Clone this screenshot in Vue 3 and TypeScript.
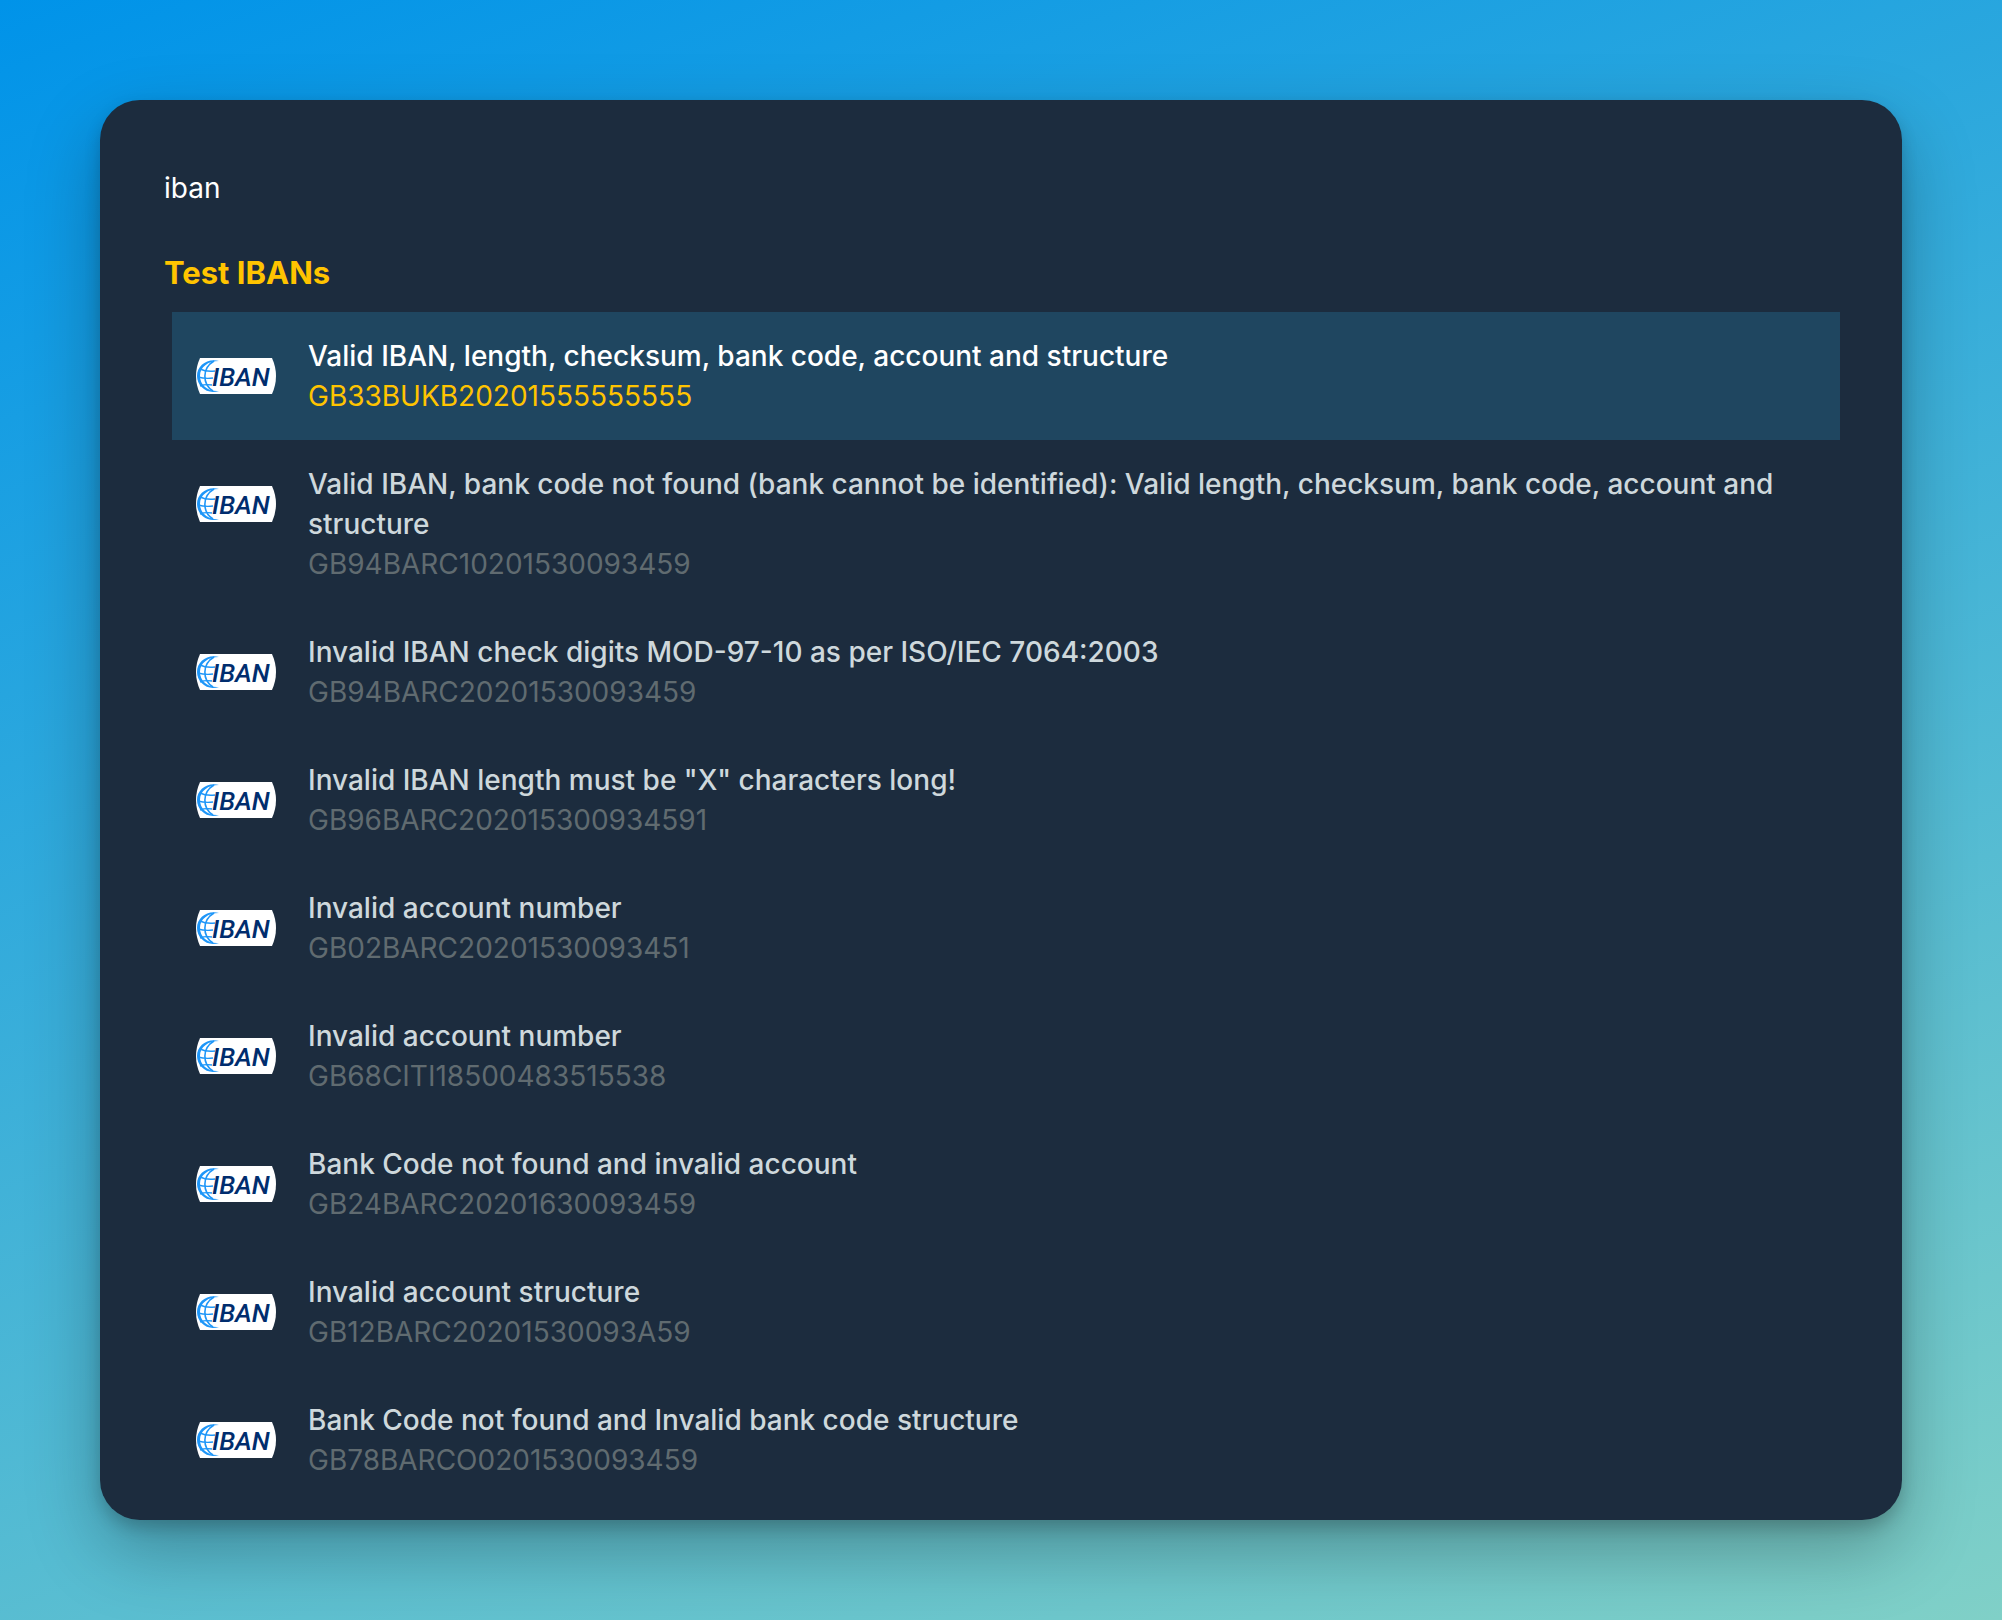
<script setup lang="ts">
import { ref } from 'vue'

interface TestIban {
  title: string
  iban: string
}

const query = ref('iban')
const selected = ref(0)

const items: TestIban[] = [
  { title: 'Valid IBAN, length, checksum, bank code, account and structure', iban: 'GB33BUKB20201555555555' },
  {
    title:
      'Valid IBAN, bank code not found (bank cannot be identified): Valid length, checksum, bank code, account and structure',
    iban: 'GB94BARC10201530093459',
  },
  { title: 'Invalid IBAN check digits MOD-97-10 as per ISO/IEC 7064:2003', iban: 'GB94BARC20201530093459' },
  { title: 'Invalid IBAN length must be "X" characters long!', iban: 'GB96BARC202015300934591' },
  { title: 'Invalid account number', iban: 'GB02BARC20201530093451' },
  { title: 'Invalid account number', iban: 'GB68CITI18500483515538' },
  { title: 'Bank Code not found and invalid account', iban: 'GB24BARC20201630093459' },
  { title: 'Invalid account structure', iban: 'GB12BARC20201530093A59' },
  { title: 'Bank Code not found and Invalid bank code structure', iban: 'GB78BARCO0201530093459' },
]
</script>

<template>
  <div class="desktop">
    <main class="panel">
      <input v-model="query" class="search" type="text" aria-label="Search" />
      <h1 class="heading">Test IBANs</h1>
      <ul class="list">
        <li v-for="(item, i) in items" :key="i">
          <button class="row" :class="{ selected: i === selected }" type="button" @click="selected = i">
            <svg class="logo" viewBox="0 0 80 36" aria-hidden="true">
              <path d="M4 0H76Q80 9 80 18T76 36H4Q0 27 0 18T4 0Z" fill="#fff" />
              <path
                d="M23 3C11 0 1 8 1 18S11 37 23 33C12 34 4 27 4 18S12 3 23 3Z"
                fill="#1e96f8"
              />
              <g fill="none" stroke="#1e96f8">
                <path d="M18 3C6 10 6 26 17 33" stroke-width="1.6" />
                <path d="M4 11Q10 14 19 13M2 19Q9 21 17 20M4 28Q9 26 16 27" stroke-width="1.4" />
              </g>
              <text x="16" y="28" class="logo-text">IBAN</text>
            </svg>
            <span class="body">
              <span class="title">{{ item.title }}</span>
              <span class="code">{{ item.iban }}</span>
            </span>
          </button>
        </li>
      </ul>
    </main>
  </div>
</template>

<style>
body {
  margin: 0;
}
</style>

<style scoped>
.desktop {
  box-sizing: border-box;
  min-height: 100vh;
  padding: 100px;
  background: linear-gradient(160deg, #0093e9 0%, #80d0c7 100%);
  font-family: Inter, "Liberation Sans", sans-serif;
  font-size: 28px;
  line-height: 40px;
}

.panel {
  box-sizing: border-box;
  padding: 64px 62px 16px 64px;
  border-radius: 40px;
  background: #1c2c3e;
  box-shadow: 0 8px 16px rgba(0, 0, 0, 0.18), 0 30px 72px rgba(0, 0, 0, 0.28);
}

.search {
  display: block;
  box-sizing: border-box;
  width: 100%;
  height: 48px;
  margin: 0;
  padding: 0;
  border: 0;
  outline: 0;
  background: transparent;
  color: #fff;
  font: inherit;
}

.heading {
  margin: 41px 0 19px;
  color: #ffc400;
  font-size: 31px;
  font-weight: 700;
  line-height: 40px;
}

.list {
  margin: 0;
  padding: 0 0 0 8px;
  list-style: none;
}

.row {
  display: flex;
  align-items: flex-start;
  gap: 32px;
  box-sizing: border-box;
  width: 100%;
  margin: 0;
  padding: 24px;
  border: 0;
  background: transparent;
  color: #ced8dc;
  font: inherit;
  text-align: left;
  cursor: pointer;
}

.row.selected {
  background: #1f4660;
  color: #fff;
}

.logo {
  flex: none;
  width: 80px;
  height: 36px;
  margin-top: 22px;
}

.logo-text {
  fill: #002d6e;
  font-family: Roboto, sans-serif;
  font-size: 26px;
  font-style: italic;
  font-weight: 500;
}

.body {
  flex: 1;
  min-width: 0;
}

.title,
.code {
  display: block;
}

.title {
  font-weight: 500;
}

.code {
  color: #606b70;
}

.selected .code {
  color: #ffc400;
}
</style>
